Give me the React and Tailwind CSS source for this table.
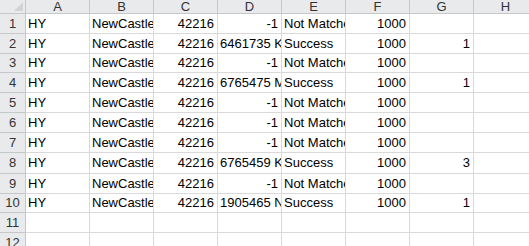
import React from "react";

const cols = ["A", "B", "C", "D", "E", "F", "G", "H"];
const NM = "Not Matched";
const NC = "NewCastle";
const rows = [
  ["HY", NC, "42216", "-1", NM, "1000", ""],
  ["HY", NC, "42216", "6461735 KRT", "Success", "1000", "1"],
  ["HY", NC, "42216", "-1", NM, "1000", ""],
  ["HY", NC, "42216", "6765475 MRT", "Success", "1000", "1"],
  ["HY", NC, "42216", "-1", NM, "1000", ""],
  ["HY", NC, "42216", "-1", NM, "1000", ""],
  ["HY", NC, "42216", "-1", NM, "1000", ""],
  ["HY", NC, "42216", "6765459 KRT", "Success", "1000", "3"],
  ["HY", NC, "42216", "-1", NM, "1000", ""],
  ["HY", NC, "42216", "1905465 NRT", "Success", "1000", "1"],
  ["", "", "", "", "", "", ""],
  ["", "", "", "", "", "", ""],
];
const heights = ["h-[20px]", "h-[20px]", "h-[19px]", "h-[20px]", "h-[20px]", "h-[20px]", "h-[20px]", "h-[21px]", "h-[20px]", "h-[19px]", "h-[20px]", "h-[20px]"];
const rightAligned = [false, false, true, null, false, true, true];

export default function App() {
  return (
    <div className="w-[529px] h-[246px] overflow-hidden bg-white text-[13px] text-black" style={{ fontFamily: '"Liberation Sans", Arial, sans-serif' }}>
      <div className="flex h-[14px]">
        <div className="relative w-[26px] h-[14px] shrink-0 bg-[#e9eaec] border-r border-b border-[#c6c7c9]">
          <div className="absolute right-[2px] bottom-[2px] w-0 h-0 border-l-[9px] border-l-transparent border-b-[9px] border-b-[#d2d3d5]" />
        </div>
        {cols.map((c) => (
          <div key={c} className="w-[64px] h-[14px] shrink-0 bg-[#e9eaec] border-r border-b border-[#c6c7c9] flex items-center justify-center text-[13px] leading-none text-[#333]">
            {c}
          </div>
        ))}
      </div>
      {rows.map((r, i) => (
        <div key={i} className={`flex ${heights[i]}`}>
          <div className="w-[26px] shrink-0 bg-[#e9eaec] border-r border-b border-[#c6c7c9] flex items-center justify-center text-[13px] text-[#333]">
            {i + 1}
          </div>
          {r.map((v, j) => {
            const isNum = j === 3 ? v === "-1" : rightAligned[j];
            return (
              <div
                key={j}
                className={`w-[64px] shrink-0 border-r border-b border-[#d9d9d9] overflow-hidden whitespace-nowrap flex items-center ${isNum ? "justify-end pr-[3px]" : "pl-[2px]"}`}
              >
                {v}
              </div>
            );
          })}
          <div className="w-[64px] shrink-0 border-r border-b border-[#d9d9d9]" />
        </div>
      ))}
    </div>
  );
}
